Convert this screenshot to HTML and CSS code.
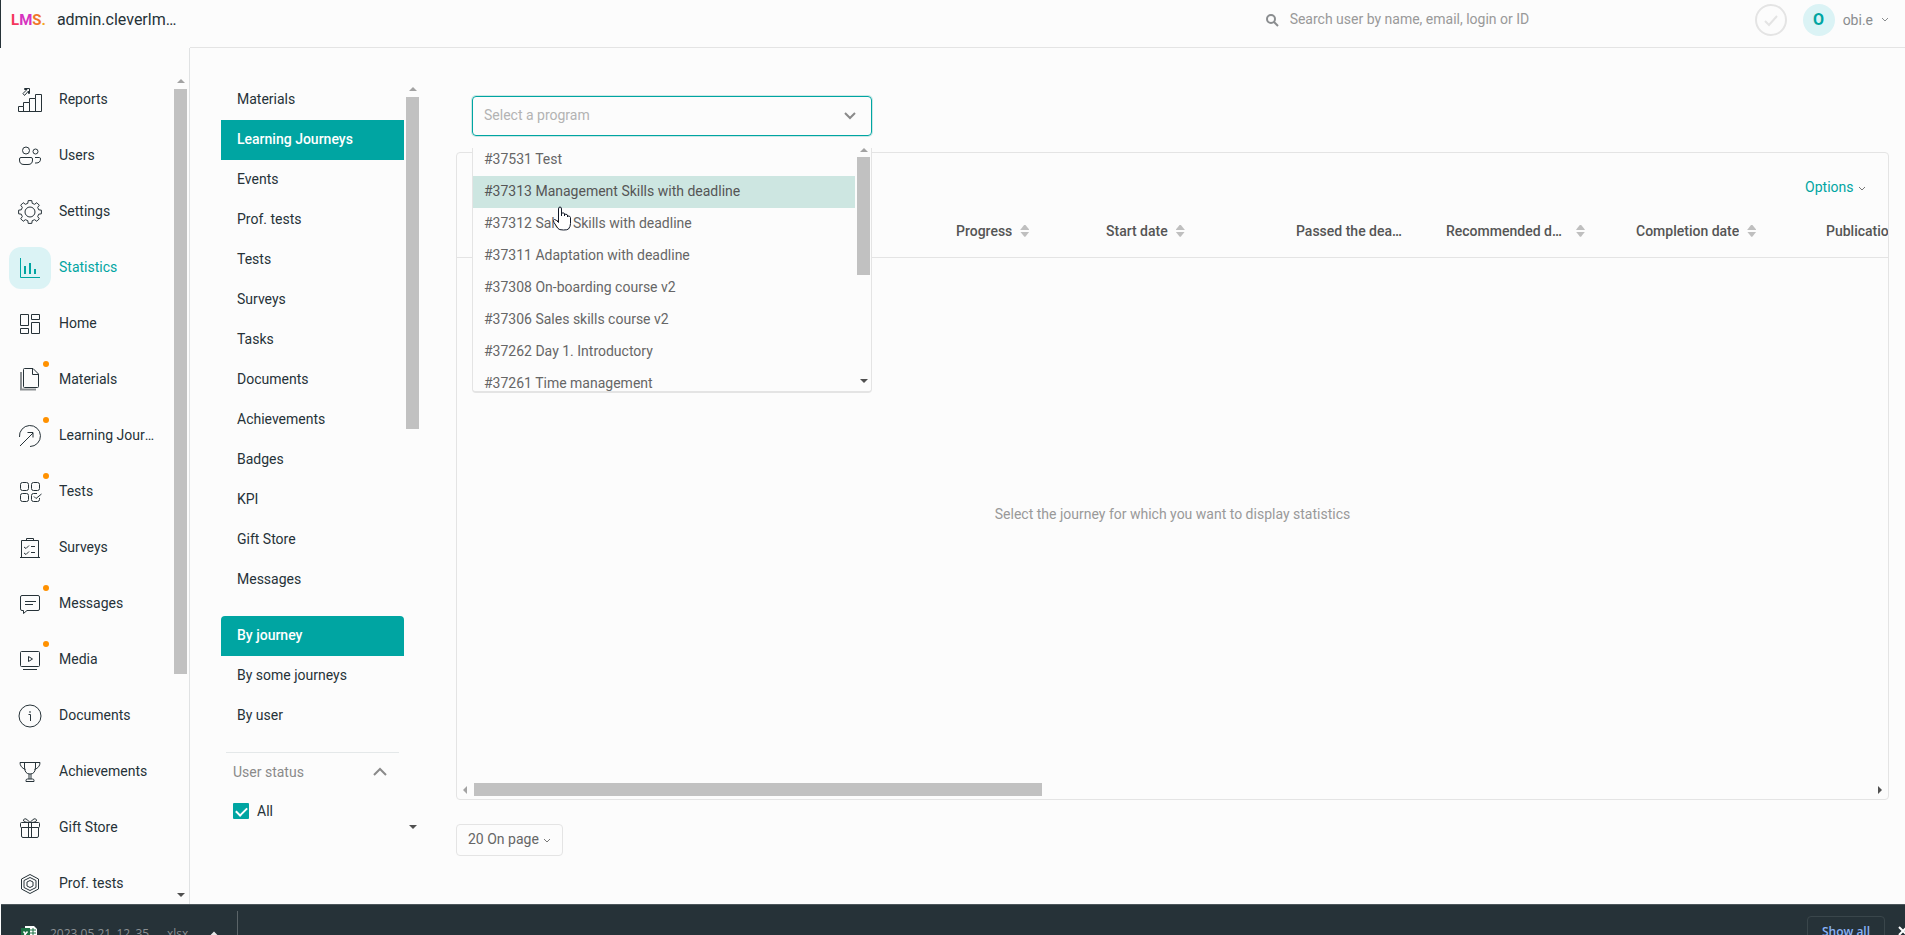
FILE: index.html
```html
<!DOCTYPE html>
<html lang="en">
<head>
  <meta charset="UTF-8" />
  <meta name="viewport" content="width=device-width, initial-scale=1.0" />
  <title>Statistics - Learning Journeys</title>
  <link rel="stylesheet" href="styles.css">
</head>
<body>

  <div class="app">
    <aside class="sidebar">
      <div class="brand">
        <a href="#" class="logo"><span class="logo-l">L</span><span class="logo-m">M</span><span class="logo-s">S</span><span class="logo-dot">.</span></a>
        <span class="brand-name">admin.cleverlms.com</span>
      </div>

      <div class="sidebar-body">
        <nav class="menu">
          <a href="#" class="menu-item">
            <span class="menu-icon"><svg width="26" height="26" viewBox="0 0 26 26"><path d="M1.500 24.500v-5h5v-4h6v-4h6v-4h6v17zM6.500 19.500v5M12.500 15.500v9M18.500 11.500v13"/><path d="M6 6.500l4-4H7.500V1.500h5v5h-1V4L7.500 8.500z"/></svg></span>
            <span class="menu-text">Reports</span>
          </a>
          <a href="#" class="menu-item">
            <span class="menu-icon"><svg width="26" height="26" viewBox="0 0 26 26"><circle cx="9" cy="7.500" r="3.500"/><circle cx="18.500" cy="8.500" r="2.500"/><path d="M4 14.500h10q1.500 0 1.500 1.500v1q0 4.500-4.500 4.500H7q-4.500 0-4.500-4.500v-1q0-1.500 1.500-1.500zM18 14.500h4.500q1 0 1 1.500 0 4-4.500 4h-1"/></svg></span>
            <span class="menu-text">Users</span>
          </a>
          <a href="#" class="menu-item">
            <span class="menu-icon"><svg width="26" height="26" viewBox="-13 -13 26 26"><circle r="5"/><path stroke-linejoin="round" d="M-2.200-8.700L-1.800-11.400H1.800L2.200-8.700 4.600-7.700 6.800-9.300 9.300-6.800 7.700-4.600 8.700-2.200 11.400-1.800V1.800L8.700 2.200 7.700 4.600 9.300 6.800 6.800 9.300 4.600 7.700 2.200 8.700 1.800 11.400H-1.800L-2.200 8.700-4.600 7.700-6.800 9.300-9.300 6.800-7.700 4.600-8.700 2.200-11.400 1.800V-1.800L-8.700-2.200-7.700-4.600-9.300-6.800-6.800-9.300-4.600-7.700z"/></svg></span>
            <span class="menu-text">Settings</span>
          </a>
          <a href="#" class="menu-item active">
            <span class="menu-icon"><svg width="26" height="26" viewBox="0 0 26 26"><path d="M3.500 3v19.500H23"/><path d="M8 11v8M13 8v11M18 14v5" stroke-width="2"/></svg></span>
            <span class="menu-text">Statistics</span>
          </a>
          <a href="#" class="menu-item">
            <span class="menu-icon"><svg width="26" height="26" viewBox="0 0 26 26"><path d="M3.500 3.500h8v11h-8zM14.500 3.500h8v5h-8zM14.500 11.500h8v11h-8zM3.500 17.500h8v5h-8z"/></svg></span>
            <span class="menu-text">Home</span>
          </a>
          <a href="#" class="menu-item new">
            <span class="menu-icon"><svg width="26" height="26" viewBox="0 0 26 26"><path d="M16 1.500H7.500q-1 0-1 1v17q0 1 1 1h13q1 0 1-1V7zM15.500 2v5.500h6"/><path d="M4 5v17.500h15" stroke="#8b8f92" stroke-width="2"/></svg></span>
            <span class="menu-text">Materials</span>
          </a>
          <a href="#" class="menu-item new">
            <span class="menu-icon"><svg width="26" height="26" viewBox="0 0 26 26"><path d="M2.500 14A10.500 10.500 0 1 1 13 23.500M3 23L16 10M10.500 9.500H16v5"/></svg></span>
            <span class="menu-text">Learning Journeys</span>
          </a>
          <a href="#" class="menu-item new">
            <span class="menu-icon"><svg width="26" height="26" viewBox="0 0 26 26"><rect x="3.500" y="3.500" width="8" height="8" rx="2"/><rect x="14.500" y="3.500" width="8" height="8" rx="2"/><rect x="3.500" y="14.500" width="8" height="8" rx="2"/><path d="M20 14.500h-3.500q-2 0-2 2v4q0 2 2 2h4q2 0 2-2V19M17 17.500l2 2 5.500-4.500"/></svg></span>
            <span class="menu-text">Tests</span>
          </a>
          <a href="#" class="menu-item">
            <span class="menu-icon"><svg width="26" height="26" viewBox="0 0 26 26"><path d="M3 22.500h20M4.500 22.500v-17h17v17M9.500 5.500v-2h7v2M14 11.500h4M14 17.500h4M7 12l2 1.500 3-3M7 18l2 1.500 3-3"/></svg></span>
            <span class="menu-text">Surveys</span>
          </a>
          <a href="#" class="menu-item new">
            <span class="menu-icon"><svg width="26" height="26" viewBox="0 0 26 26"><path d="M5 4.500h16q1.500 0 1.500 1.500v12q0 1.500-1.500 1.500H10l-3.500 3v-3H5q-1.500 0-1.500-1.500V6q0-1.500 1.500-1.500zM8 10.500h11M8 13.500h8"/></svg></span>
            <span class="menu-text">Messages</span>
          </a>
          <a href="#" class="menu-item new">
            <span class="menu-icon"><svg width="26" height="26" viewBox="0 0 26 26"><rect x="3.500" y="4.500" width="19" height="15" rx="1"/><path d="M6 22.500h14M11.500 9.500v5l4-2.500z"/></svg></span>
            <span class="menu-text">Media</span>
          </a>
          <a href="#" class="menu-item">
            <span class="menu-icon"><svg width="26" height="26" viewBox="0 0 26 26"><circle cx="13" cy="13" r="11"/><path d="M11.500 11.500H13.500V18M13 8v2"/></svg></span>
            <span class="menu-text">Documents</span>
          </a>
          <a href="#" class="menu-item">
            <span class="menu-icon"><svg width="26" height="26" viewBox="0 0 26 26"><path d="M3 3.500h20q0 5-5.500 7M3 3.500q0 5 5.500 7M7.500 3.500V8q0 7 5.500 7t5.500-7V3.500M12 15v5M14 15v5M9 22.500h8v-1q0-1.500-1.500-1.500h-5Q9 20 9 21.500z"/></svg></span>
            <span class="menu-text">Achievements</span>
          </a>
          <a href="#" class="menu-item">
            <span class="menu-icon"><svg width="26" height="26" viewBox="0 0 26 26"><path d="M4.500 12.500v8.500q0 1.500 1.500 1.500h14q1.500 0 1.500-1.500v-8.500M4.500 7.500h17q1 0 1 1v3q0 1-1 1h-17q-1 0-1-1v-3q0-1 1-1zM11.500 7.500v15M14.500 7.500v15M13 7.500Q6 7.500 6.500 5 8 1.500 13 7.500M13 7.500q7 0 6.500-2.500Q18 1.500 13 7.500"/></svg></span>
            <span class="menu-text">Gift Store</span>
          </a>
          <a href="#" class="menu-item">
            <span class="menu-icon"><svg width="26" height="26" viewBox="0 0 26 26"><path d="M13 3.500l8.500 4.500v10L13 22.500 4.500 18V8zM13 6.500l6 3v7l-6 3-6-3v-7z"/><path d="M13 9.500l3 1.500v4l-3 1.500-3-1.500v-4z"/></svg></span>
            <span class="menu-text">Prof. tests</span>
          </a>
        </nav>
        <div class="scrollbar scroll-menu">
          <span class="arrow up"></span>
          <span class="thumb"></span>
          <span class="arrow down"></span>
        </div>
      </div>
    </aside>

    <div class="page">
      <header class="topbar">
        <label class="search">
          <svg width="14" height="14" viewBox="0 0 14 14"><circle cx="6" cy="6" r="4"/><path d="M9 9l4 4"/></svg>
          <input type="text" placeholder="Search user by name, email, login or ID">
        </label>
        <button type="button" class="status" aria-label="Tasks">
          <svg width="32" height="32" viewBox="0 0 32 32"><circle cx="16" cy="16" r="15"/><path d="M10 17l4 4 8-9"/></svg>
        </button>
        <button type="button" class="user">
          <span class="avatar">O</span>
          <span>obi.e</span>
          <svg width="8" height="6" viewBox="0 0 8 6"><path d="M1 1l3 3 3-3"/></svg>
        </button>
      </header>

      <div class="content">
        <div class="subnav">
          <div class="subnav-list">
            <nav class="group">
              <a href="#">Materials</a>
              <a href="#" class="active">Learning Journeys</a>
              <a href="#">Events</a>
              <a href="#">Prof. tests</a>
              <a href="#">Tests</a>
              <a href="#">Surveys</a>
              <a href="#">Tasks</a>
              <a href="#">Documents</a>
              <a href="#">Achievements</a>
              <a href="#">Badges</a>
              <a href="#">KPI</a>
              <a href="#">Gift Store</a>
              <a href="#">Messages</a>
            </nav>
            <nav class="group rounded">
              <a href="#" class="active">By journey</a>
              <a href="#">By some journeys</a>
              <a href="#">By user</a>
            </nav>
            <div class="filter">
              <button type="button" class="filter-title">
                <span>User status</span>
                <svg width="16" height="10" viewBox="0 0 16 10"><path d="M2 8l6-6 6 6"/></svg>
              </button>
              <label class="check"><input type="checkbox" checked> All</label>
            </div>
          </div>
          <div class="scrollbar scroll-subnav">
            <span class="arrow up"></span>
            <span class="thumb"></span>
            <span class="arrow down"></span>
          </div>
        </div>

        <main class="main">
          <div class="program">
            <input type="text" class="program-input" placeholder="Select a program" aria-label="Select a program">
            <svg class="program-arrow" width="14" height="10" viewBox="0 0 14 10"><path d="M2 2l5 5 5-5"/></svg>

            <div class="dropdown">
              <ul class="options">
                <li>#37531 Test</li>
                <li class="hover">#37313 Management Skills with deadline</li>
                <li>#37312 Sales Skills with deadline</li>
                <li>#37311 Adaptation with deadline</li>
                <li>#37308 On-boarding course v2</li>
                <li>#37306 Sales skills course v2</li>
                <li>#37262 Day 1. Introductory</li>
                <li>#37261 Time management</li>
              </ul>
              <div class="scrollbar scroll-options">
                <span class="arrow up"></span>
                <span class="thumb"></span>
                <span class="arrow down"></span>
              </div>
            </div>

            <svg class="cursor" width="20" height="25" viewBox="0 0 20 25"><path d="M6.500 14V3Q6.500 1 8 1t1.500 2v7-2.500q1.500-1.500 3 0V10 8.500q1.500-1 3 .5v2-1q2.500-.5 3 1.500v6q0 3-2 5.500-1 1-5 1-4.500 0-5.500-1.500L2 16.500Q.5 14 2.500 13.500q1.500 0 4 3z"/></svg>
          </div>

          <section class="panel">
            <div class="panel-bar">
              <button type="button" class="link-btn">Options <svg width="6" height="5" viewBox="0 0 6 5"><path d="M0 1l3 3 3-3"/></svg></button>
            </div>
            <div class="table-wrap">
              <table>
                <colgroup>
                  <col class="w-user">
                  <col class="w-small">
                  <col class="w-big">
                  <col class="w-small">
                  <col class="w-big">
                  <col class="w-big">
                  <col class="w-big">
                </colgroup>
                <thead>
                  <tr>
                    <th></th>
                    <th><div class="th"><span>Progress</span><i class="sort"></i></div></th>
                    <th><div class="th"><span>Start date</span><i class="sort"></i></div></th>
                    <th><div class="th"><span>Passed the deadline</span></div></th>
                    <th><div class="th"><span>Recommended deadline</span><i class="sort"></i></div></th>
                    <th><div class="th"><span>Completion date</span><i class="sort"></i></div></th>
                    <th><div class="th"><span>Publication date</span></div></th>
                  </tr>
                </thead>
              </table>
            </div>
            <p class="empty">Select the journey for which you want to display statistics</p>
            <div class="scrollbar horizontal">
              <span class="arrow left"></span>
              <span class="thumb"></span>
              <span class="arrow right"></span>
            </div>
          </section>

          <button type="button" class="per-page">20 On page <svg width="6" height="5" viewBox="0 0 6 5"><path d="M0 1l3 3 3-3"/></svg></button>
        </main>
      </div>
    </div>
  </div>

  <footer class="downloads">
    <button type="button" class="file">
      <svg width="16" height="16" viewBox="0 0 16 16"><path d="M4 0h9l3 3v13H4z" fill="#fff" stroke="none"/><path d="M9 4h6M9 7h6M9 10h6M12 2v10" stroke="#1d7044"/><path d="M0 2h9v11H0z" fill="#1d7044" stroke="none"/><path d="M2.500 5.500l4 5M6.500 5.500l-4 5" stroke="#fff" stroke-width="1.500"/></svg>
      <span>2023.05.21_12_35_....xlsx</span>
      <svg class="caret" width="12" height="8" viewBox="0 0 12 8"><path d="M2 7l4-4 4 4"/></svg>
    </button>
    <button type="button" class="show-all">Show all</button>
    <button type="button" class="close" aria-label="Close"><svg width="12" height="12" viewBox="0 0 12 12"><path d="M2 2l8 8M10 2l-8 8"/></svg></button>
  </footer>

</body>
</html>
```
FILE: styles.css
```css
* {
  box-sizing: border-box;
}
body {
  margin: 0;
  height: 100vh;
  overflow: hidden;
  display: flex;
  flex-direction: column;
  font-family: Roboto, "Liberation Sans", sans-serif;
  font-size: 14px;
  line-height: 20px;
  color: #263238;
  background: #fcfcfc;
}
a {
  color: inherit;
  text-decoration: none;
}
button, input {
  font: inherit;
  color: inherit;
  background: none;
  border: none;
  padding: 0;
}
button {
  cursor: pointer;
}
svg {
  fill: none;
  stroke: currentColor;
  flex: none;
}
.app {
  flex: 1;
  min-height: 0;
  display: flex;
}

/* left menu */
.sidebar {
  width: 190px;
  flex: none;
  display: flex;
  flex-direction: column;
}
.brand {
  height: 48px;
  flex: none;
  display: flex;
  gap: 11px;
  padding: 10px 8px 0 10px;
  border-left: 1px solid #263238;
}
.logo {
  font-size: 15px;
  font-weight: 700;
}
.logo-l { color: #f5365c; }
.logo-m { color: #d633c0; }
.logo-s { color: #f0762b; }
.logo-dot { color: #f5a623; }
.brand-name {
  width: 124px;
  font-size: 16px;
  overflow: hidden;
  white-space: nowrap;
  text-overflow: ellipsis;
}
.sidebar-body {
  flex: 1;
  min-height: 0;
  display: flex;
  justify-content: space-between;
  padding-right: 2px;
  border-right: 1px solid #e0e2e3;
}
.menu {
  width: 160px;
  padding-top: 24px;
  overflow: hidden;
}
.menu-item {
  position: relative;
  display: flex;
  align-items: center;
  gap: 8px;
  height: 56px;
  padding-left: 9px;
}
.menu-icon {
  width: 42px;
  height: 42px;
  flex: none;
  display: flex;
  align-items: center;
  justify-content: center;
  border-radius: 12px;
}
.menu-text {
  width: 96px;
  padding-bottom: 2px;
  overflow: hidden;
  white-space: nowrap;
  text-overflow: ellipsis;
}
.menu-item.active {
  color: #00a5a2;
}
.menu-item.active .menu-icon {
  background: #dbf3f5;
}
.menu-item.new::after {
  content: "";
  position: absolute;
  left: 43px;
  top: 9px;
  width: 6px;
  height: 6px;
  border-radius: 50%;
  background: #ff9100;
}

/* scrollbars */
.scrollbar {
  width: 13px;
  flex: none;
  display: flex;
  flex-direction: column;
  align-items: center;
}
.thumb {
  width: 100%;
  background: #c1c1c1;
}
.arrow {
  border: 4px solid transparent;
}
.arrow.up {
  border-top: none;
  border-bottom-color: #a3a3a3;
  margin-bottom: 6px;
}
.arrow.down {
  border-bottom: none;
  border-top-color: #505050;
  margin-top: auto;
}
.arrow.left {
  border-left: none;
  border-right-color: #a3a3a3;
}
.arrow.right {
  border-right: none;
  border-left-color: #505050;
  margin-left: auto;
}
.scroll-menu {
  padding: 31px 0 7px;
}
.scroll-menu .thumb {
  height: 585px;
}
.scroll-subnav {
  padding: 39px 0 75px;
}
.scroll-subnav .thumb {
  height: 332px;
}
.scroll-options {
  padding: 0 0 8px;
}
.scroll-options .thumb {
  height: 118px;
}
.scroll-options .arrow.up {
  margin-bottom: 5px;
}
.scrollbar.horizontal {
  width: 100%;
  height: 13px;
  flex-direction: row;
  gap: 7px;
  padding: 0 6px;
}
.horizontal .thumb {
  width: 40%;
  height: 13px;
}

/* top bar */
.page {
  flex: 1;
  min-width: 0;
  display: flex;
  flex-direction: column;
}
.topbar {
  height: 48px;
  flex: none;
  display: flex;
  align-items: flex-start;
  justify-content: flex-end;
  padding: 4px 16px 0;
  border-bottom: 1px solid #e4e4e4;
  color: #8a8d8f;
}
.search {
  display: flex;
  align-items: center;
  gap: 11px;
  width: 490px;
  height: 32px;
}
.search svg {
  stroke-width: 2;
}
.search input {
  flex: 1;
  height: 30px;
  margin-bottom: 2px;
  outline: none;
}
input::placeholder {
  color: #999;
  opacity: 1;
}
.status {
  width: 32px;
  height: 32px;
  color: #e4e4e4;
}
.status svg {
  display: block;
  stroke-width: 2;
}
.user {
  display: flex;
  align-items: center;
  gap: 8px;
  margin-left: 16px;
}
.avatar {
  width: 32px;
  height: 32px;
  line-height: 32px;
  border-radius: 50%;
  background: #dbf3f5;
  color: #00a5a2;
  font-size: 16px;
  font-weight: 700;
}

.content {
  flex: 1;
  min-height: 0;
  display: flex;
}

/* second level menu */
.subnav {
  width: 229px;
  flex: none;
  display: flex;
  justify-content: space-between;
  padding-left: 31px;
}
.subnav-list {
  width: 183px;
  padding-top: 32px;
}
.group {
  margin-bottom: 16px;
}
.group a {
  display: block;
  height: 40px;
  line-height: 38px;
  padding-left: 16px;
}
.group a.active {
  background: #00a5a2;
  color: #fff;
  font-weight: 500;
}
.group.rounded a.active {
  border-radius: 4px 4px 0 0;
}
.filter {
  margin: 0 5px;
  border-top: 1px solid #e4e8e9;
}
.filter-title {
  display: flex;
  align-items: center;
  justify-content: space-between;
  width: 100%;
  height: 38px;
  padding: 0 11px 0 7px;
  color: #8a8a8a;
}
.filter-title svg {
  stroke-width: 2;
}
.check {
  display: flex;
  align-items: center;
  gap: 8px;
  height: 40px;
  padding-left: 7px;
}
.check input {
  appearance: none;
  width: 16px;
  height: 16px;
  margin: 0;
  border-radius: 1px;
  background: #00a5a2;
}
.check input:checked::before {
  content: "";
  display: block;
  width: 5px;
  height: 9px;
  margin: 2px auto;
  border: solid #fff;
  border-width: 0 2px 2px 0;
  transform: rotate(45deg);
}

/* main part */
.main {
  flex: 1;
  min-width: 0;
  padding: 48px 16px 48px 37px;
  display: flex;
  flex-direction: column;
  align-items: flex-start;
}
.program {
  position: relative;
  width: 400px;
  margin-left: 16px;
}
.program-input {
  display: block;
  width: 100%;
  height: 40px;
  padding: 0 40px 2px 11px;
  border: 1px solid #00a5a2;
  border-radius: 4px;
  box-shadow: 0 0 0 1px #cce8e6;
  outline: none;
}
.program-input::placeholder {
  color: #b3b3b3;
}
.program-arrow {
  position: absolute;
  right: 15px;
  top: 15px;
  color: #8a8a8a;
  stroke-width: 2;
}
.dropdown {
  position: absolute;
  left: 0;
  top: 52px;
  width: 100%;
  height: 245px;
  padding-right: 1px;
  display: flex;
  justify-content: space-between;
  background: #fcfcfc;
  border: 1px solid #e4e4e4;
  border-top: none;
  border-bottom-width: 2px;
  border-radius: 0 0 4px 4px;
  overflow: hidden;
}
.options {
  list-style: none;
  width: 382px;
  margin: -4px 0 0;
  padding: 0;
  color: #666;
}
.options li {
  height: 32px;
  line-height: 30px;
  padding-left: 11px;
}
.options .hover {
  background: #cde6e1;
  color: #555;
}
.cursor {
  position: absolute;
  left: 80px;
  top: 110px;
  fill: #fff;
  stroke: #111827;
}
.panel {
  flex: 1;
  width: 100%;
  min-height: 0;
  margin-top: 16px;
  display: flex;
  flex-direction: column;
  padding-bottom: 3px;
  border: 1px solid #e4e4e4;
  border-radius: 4px;
}
.panel-bar {
  height: 54px;
  display: flex;
  justify-content: flex-end;
  align-items: flex-end;
  padding: 0 23px 10px;
}
.link-btn {
  color: #00a5a2;
}
.link-btn svg, .per-page svg {
  margin: 0 0 1px 2px;
  color: #777;
}
.table-wrap {
  overflow: hidden;
}
table {
  width: 1543px;
  table-layout: fixed;
  border-collapse: collapse;
}
.w-user { width: 483px; }
.w-small { width: 150px; }
.w-big { width: 190px; }
th {
  height: 50px;
  padding: 0 26px 0 16px;
  border-bottom: 1px solid #e4e4e4;
  text-align: left;
  font-weight: 500;
  color: #555;
}
.th {
  display: flex;
  align-items: center;
  gap: 8px;
  max-width: 139px;
  padding-bottom: 2px;
}
.th span {
  overflow: hidden;
  white-space: nowrap;
  text-overflow: ellipsis;
}
.sort {
  width: 9px;
  height: 12px;
  flex: none;
  border-top: 5px solid #bfbfbf;
  border-bottom: 5px solid #bfbfbf;
  clip-path: polygon(0 5px, 4px 0, 5px 0, 9px 5px, 9px 7px, 5px 12px, 4px 12px, 0 7px);
}
.empty {
  flex: 1;
  display: flex;
  align-items: center;
  justify-content: center;
  margin: 0;
  padding-bottom: 12px;
  color: #999;
}
.per-page {
  height: 32px;
  margin-top: 24px;
  padding: 0 12px 2px 11px;
  border: 1px solid #e4e4e4;
  border-radius: 4px;
  color: #666;
}

/* downloads strip */
.downloads {
  height: 31px;
  flex: none;
  margin-left: 1px;
  display: flex;
  overflow: hidden;
  background: #263238;
  border-top: 1px solid #4c565b;
  font-family: "Open Sans", sans-serif;
}
.file {
  display: flex;
  align-items: center;
  width: 237px;
  height: 46px;
  margin-top: 6px;
  padding-left: 20px;
  border-right: 1px solid #5b6468;
  color: #8a8f92;
  font-size: 12px;
}
.file span {
  width: 142px;
  margin: 0 16px 0 13px;
  text-align: left;
  white-space: nowrap;
}
.caret {
  color: #e8e8e8;
  stroke-width: 2;
}
.show-all {
  width: 78px;
  height: 32px;
  margin: 11px 12px 0 auto;
  border: 1px solid #3a464b;
  border-radius: 4px;
  color: #8ab4f8;
  font-size: 12px;
  font-weight: 600;
}
.close {
  width: 8px;
  height: 32px;
  margin-top: 11px;
  color: #fff;
}
.close svg {
  stroke-width: 2;
}
```
